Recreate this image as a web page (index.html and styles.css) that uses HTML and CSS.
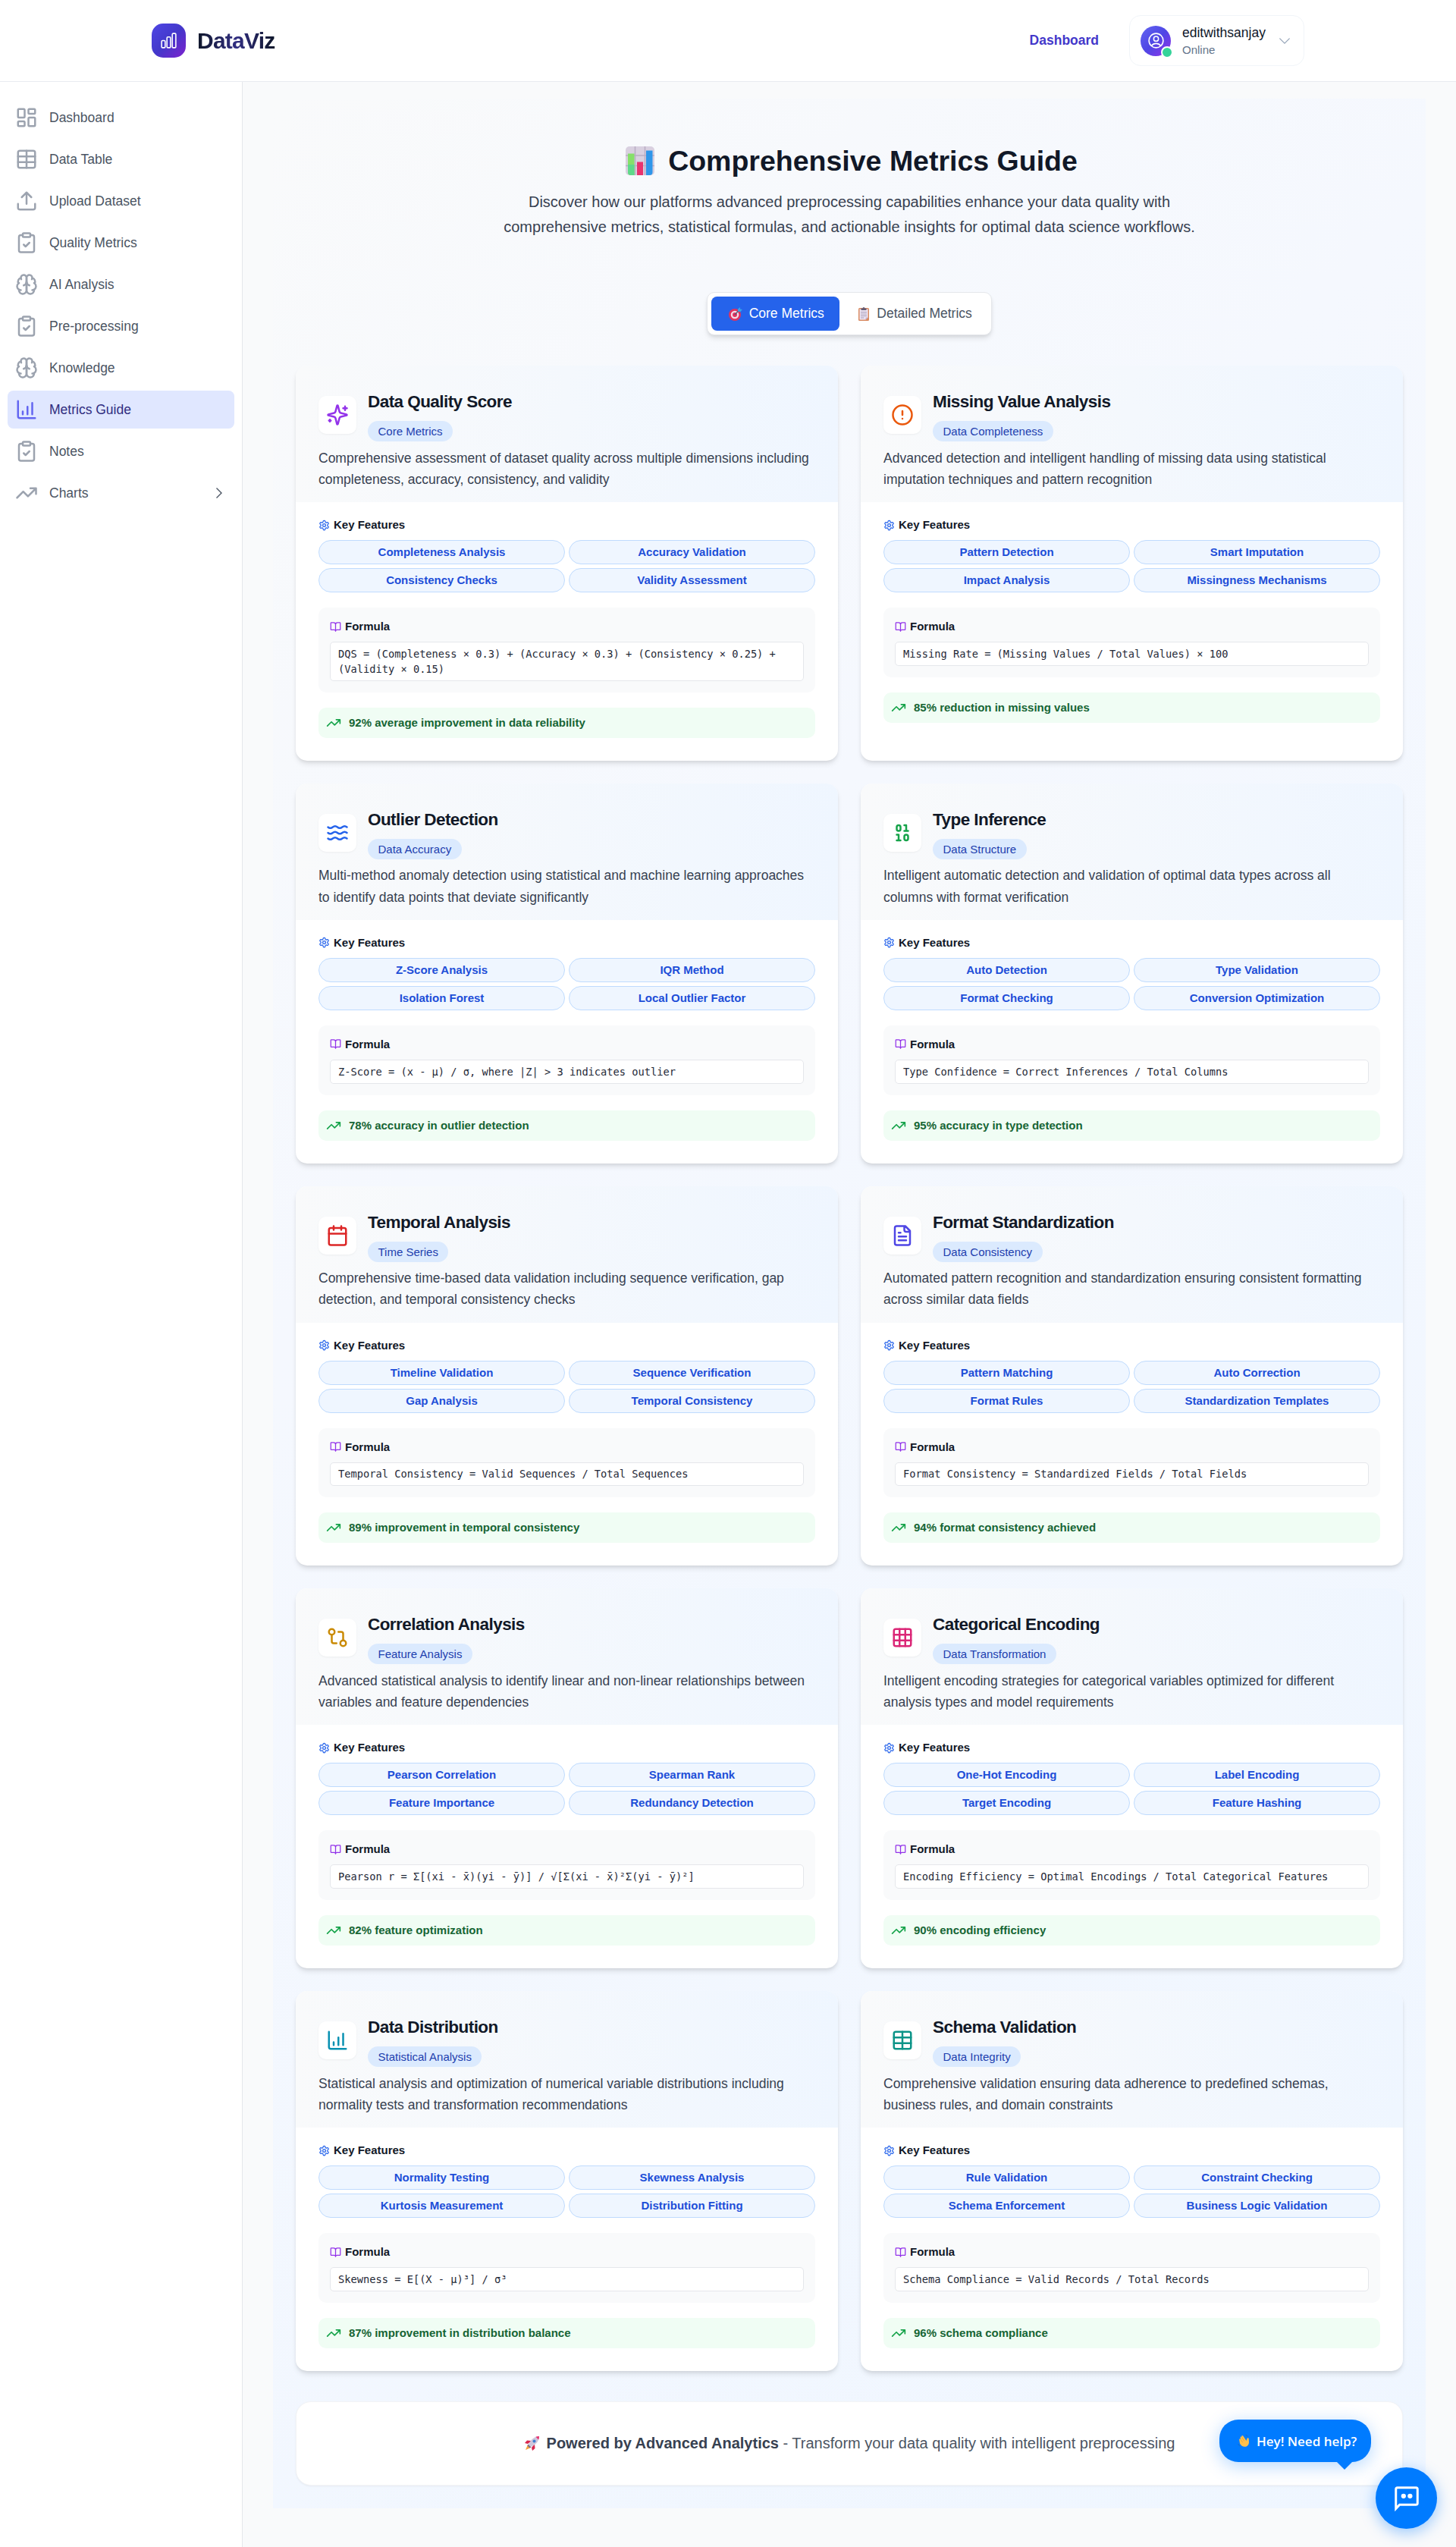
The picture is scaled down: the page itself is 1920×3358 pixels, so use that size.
FILE: index.html
```html
<!DOCTYPE html>
<html lang="en">
<head>
<meta charset="utf-8">
<title>DataViz</title>
<link rel="stylesheet" href="styles.css">
</head>
<body>
<svg class="sprite" aria-hidden="true">
  <symbol id="dashboard" viewBox="0 0 24 24"><rect x="3" y="3" width="7" height="9" rx="1"/><rect x="14" y="3" width="7" height="5" rx="1"/><rect x="14" y="12" width="7" height="9" rx="1"/><rect x="3" y="16" width="7" height="5" rx="1"/></symbol>
  <symbol id="table" viewBox="0 0 24 24"><path d="M12 3v18M3 9h18M3 15h18"/><rect x="3" y="3" width="18" height="18" rx="2"/></symbol>
  <symbol id="upload" viewBox="0 0 24 24"><path d="M21 15v4a2 2 0 0 1-2 2H5a2 2 0 0 1-2-2v-4M17 8l-5-5-5 5M12 3v12"/></symbol>
  <symbol id="clipboard" viewBox="0 0 24 24"><rect x="8" y="2" width="8" height="4" rx="1"/><path d="M16 4h2a2 2 0 0 1 2 2v14a2 2 0 0 1-2 2H6a2 2 0 0 1-2-2V6a2 2 0 0 1 2-2h2M9 14l2 2 4-4"/></symbol>
  <symbol id="brain" viewBox="0 0 24 24"><path d="M12 5a3 3 0 1 0-5.997.125 4 4 0 0 0-2.526 5.77 4 4 0 0 0 .556 6.588A4 4 0 1 0 12 18Z"/><path d="M12 5a3 3 0 1 1 5.997.125 4 4 0 0 1 2.526 5.77 4 4 0 0 1-.556 6.588A4 4 0 1 1 12 18Z"/><path d="M15 13a4.5 4.5 0 0 1-3-4 4.5 4.5 0 0 1-3 4M17.599 6.5a3 3 0 0 0 .399-1.375M6.003 5.125A3 3 0 0 0 6.401 6.5M3.477 10.896a4 4 0 0 1 .585-.396M19.938 10.5a4 4 0 0 1 .585.396M6 18a4 4 0 0 1-1.967-.516M19.967 17.484A4 4 0 0 1 18 18"/></symbol>
  <symbol id="chart" viewBox="0 0 24 24"><path d="M13 17V9M18 17V5M3 3v16a2 2 0 0 0 2 2h16M8 17v-3"/></symbol>
  <symbol id="trend" viewBox="0 0 24 24"><path d="M22 7l-8.500 8.500-5-5L2 17M16 7h6v6"/></symbol>
  <symbol id="sparkles" viewBox="0 0 24 24"><path d="M9.937 15.5A2 2 0 0 0 8.5 14.063l-6.135-1.582a.5.5 0 0 1 0-.962L8.5 9.936A2 2 0 0 0 9.937 8.5l1.582-6.135a.5.5 0 0 1 .963 0L14.063 8.5A2 2 0 0 0 15.5 9.937l6.135 1.581a.5.5 0 0 1 0 .964L15.5 14.063a2 2 0 0 0-1.437 1.437l-1.582 6.135a.5.5 0 0 1-.963 0zM20 3v4M22 5h-4M4 17v2M5 18H3"/></symbol>
  <symbol id="alert" viewBox="0 0 24 24"><circle cx="12" cy="12" r="10"/><path d="M12 8v4M12 16h.01"/></symbol>
  <symbol id="waves" viewBox="0 0 24 24"><path d="M2 6c.6.5 1.2 1 2.5 1C7 7 7 5 9.5 5c2.6 0 2.4 2 5 2 2.5 0 2.5-2 5-2 1.3 0 1.9.5 2.5 1M2 12c.6.5 1.2 1 2.5 1 2.5 0 2.5-2 5-2 2.6 0 2.4 2 5 2 2.5 0 2.500-2 5-2 1.3 0 1.9.5 2.5 1M2 18c.6.5 1.2 1 2.500 1 2.500 0 2.500-2 5-2 2.6 0 2.4 2 5 2 2.500 0 2.500-2 5-2 1.3 0 1.9.5 2.500 1"/></symbol>
  <symbol id="binary" viewBox="0 0 24 24"><rect x="14" y="14" width="4" height="6" rx="2"/><rect x="6" y="4" width="4" height="6" rx="2"/><path d="M6 20h4M14 10h4M6 14h2v6M14 4h2v6"/></symbol>
  <symbol id="calendar" viewBox="0 0 24 24"><path d="M8 2v4M16 2v4M3 10h18"/><rect x="3" y="4" width="18" height="18" rx="2"/></symbol>
  <symbol id="file" viewBox="0 0 24 24"><path d="M15 2H6a2 2 0 0 0-2 2v16a2 2 0 0 0 2 2h12a2 2 0 0 0 2-2V7ZM14 2v4a2 2 0 0 0 2 2h4M10 9H8M16 13H8M16 17H8"/></symbol>
  <symbol id="compare" viewBox="0 0 24 24"><circle cx="18" cy="18" r="3"/><circle cx="6" cy="6" r="3"/><path d="M13 6h3a2 2 0 0 1 2 2v7M11 18H8a2 2 0 0 1-2-2V9"/></symbol>
  <symbol id="grid" viewBox="0 0 24 24"><rect x="3" y="3" width="18" height="18" rx="2"/><path d="M3 9h18M3 15h18M9 3v18M15 3v18"/></symbol>
  <symbol id="gear" viewBox="0 0 24 24"><path d="M12.22 2h-.44a2 2 0 0 0-2 2v.18a2 2 0 0 1-1 1.73l-.43.25a2 2 0 0 1-2 0l-.15-.08a2 2 0 0 0-2.73.73l-.22.38a2 2 0 0 0 .73 2.73l.15.1a2 2 0 0 1 1 1.72v.51a2 2 0 0 1-1 1.74l-.15.09a2 2 0 0 0-.73 2.73l.22.38a2 2 0 0 0 2.73.73l.15-.08a2 2 0 0 1 2 0l.43.25a2 2 0 0 1 1 1.73V20a2 2 0 0 0 2 2h.44a2 2 0 0 0 2-2v-.18a2 2 0 0 1 1-1.73l.43-.25a2 2 0 0 1 2 0l.15.08a2 2 0 0 0 2.73-.73l.22-.39a2 2 0 0 0-.73-2.73l-.15-.08a2 2 0 0 1-1-1.74v-.5a2 2 0 0 1 1-1.74l.15-.09a2 2 0 0 0 .73-2.73l-.22-.38a2 2 0 0 0-2.73-.73l-.15.08a2 2 0 0 1-2 0l-.43-.25a2 2 0 0 1-1-1.73V4a2 2 0 0 0-2-2z"/><circle cx="12" cy="12" r="3"/></symbol>
  <symbol id="book" viewBox="0 0 24 24"><path d="M12 7v14M3 18a1 1 0 0 1-1-1V4a1 1 0 0 1 1-1h5a4 4 0 0 1 4 4 4 4 0 0 1 4-4h5a1 1 0 0 1 1 1v13a1 1 0 0 1-1 1h-6a3 3 0 0 0-3 3 3 3 0 0 0-3-3z"/></symbol>
  <symbol id="bars" viewBox="0 0 24 24"><path d="M3 13.125C3 12.504 3.504 12 4.125 12h2.25c.621 0 1.125.504 1.125 1.125v6.75C7.500 20.496 6.996 21 6.375 21h-2.250A1.125 1.125 0 0 1 3 19.875v-6.750ZM9.750 8.625c0-.621.504-1.125 1.125-1.125h2.250c.621 0 1.125.504 1.125 1.125v11.250c0 .621-.504 1.125-1.125 1.125h-2.250a1.125 1.125 0 0 1-1.125-1.125V8.625ZM16.500 4.125c0-.621.504-1.125 1.125-1.125h2.250C20.496 3 21 3.504 21 4.125v15.750c0 .621-.504 1.125-1.125 1.125h-2.250a1.125 1.125 0 0 1-1.125-1.125V4.125Z"/></symbol>
  <symbol id="user" viewBox="0 0 24 24"><path d="M17.982 18.725A7.488 7.488 0 0 0 12 15.750a7.488 7.488 0 0 0-5.982 2.975m11.963 0a9 9 0 1 0-11.963 0m11.963 0A8.966 8.966 0 0 1 12 21a8.966 8.966 0 0 1-5.982-2.275M15 9.750a3 3 0 1 1-6 0 3 3 0 0 1 6 0Z"/></symbol>
</svg>

<header class="topbar">
  <div class="brand">
    <span class="brand-mark"><svg class="icon thin" width="25" height="25"><use href="#bars"/></svg></span>
    <span class="brand-name">DataViz</span>
  </div>
  <div class="topbar-right">
    <a class="top-link">Dashboard</a>
    <div class="user">
      <span class="avatar"><svg class="icon thin" width="25" height="25"><use href="#user"/></svg><i class="presence"></i></span>
      <span class="user-text"><span class="user-name">editwithsanjay</span><span class="user-state">Online</span></span>
      <svg class="icon thin user-caret" width="20" height="20" viewBox="0 0 24 24"><path d="M19.500 8.250l-7.500 7.500-7.500-7.500"/></svg>
    </div>
  </div>
</header>

<div class="shell">
  <nav class="sidebar">
    <a class="nav-item"><svg class="icon"><use href="#dashboard"/></svg>Dashboard</a>
    <a class="nav-item"><svg class="icon"><use href="#table"/></svg>Data Table</a>
    <a class="nav-item"><svg class="icon"><use href="#upload"/></svg>Upload Dataset</a>
    <a class="nav-item"><svg class="icon"><use href="#clipboard"/></svg>Quality Metrics</a>
    <a class="nav-item"><svg class="icon"><use href="#brain"/></svg>AI Analysis</a>
    <a class="nav-item"><svg class="icon"><use href="#clipboard"/></svg>Pre-processing</a>
    <a class="nav-item"><svg class="icon"><use href="#brain"/></svg>Knowledge</a>
    <a class="nav-item active"><svg class="icon"><use href="#chart"/></svg>Metrics Guide</a>
    <a class="nav-item"><svg class="icon"><use href="#clipboard"/></svg>Notes</a>
    <a class="nav-item"><svg class="icon"><use href="#trend"/></svg>Charts<svg class="nav-caret" viewBox="0 0 20 20"><path d="M6.500 3.500 13 10l-6.500 6.500"/></svg></a>
  </nav>

  <main class="content">
    <div class="guide">
      <section class="intro">
        <h1>
          <svg class="emoji-title" viewBox="0 0 38 38"><rect width="38" height="38" rx="5" fill="#d9d0e0"/><path d="M12.500 0v38M25.500 0v38M0 12h38M0 25.500h38" stroke="#b9adc4" stroke-width="1.500"/><path d="M3 9.500h8.500V38H7a4 4 0 0 1-4-4z" fill="#86e06a"/><path d="M3 24h8.500v14H7a4 4 0 0 1-4-4z" fill="#5fd98a"/><path d="M15 20.500h8V38h-8z" fill="#e8336f"/><path d="M27 5.500h8.500V34a4 4 0 0 1-4 4H27z" fill="#2f96ea"/></svg>Comprehensive Metrics Guide</h1>
        <p>Discover how our platforms advanced preprocessing capabilities enhance your data quality with comprehensive metrics, statistical formulas, and actionable insights for optimal data science workflows.</p>
      </section>

      <div class="tabs-row"><div class="tabs">
        <button class="tab selected"><svg class="emoji" viewBox="0 0 18 18"><circle cx="8" cy="10" r="8" fill="#e0335f"/><circle cx="8" cy="10" r="5.300" fill="#f3dbe6"/><circle cx="8" cy="10" r="3" fill="#e0335f"/><path d="M8 10l5.500-6" stroke="#4b5c78" stroke-width="1.200"/><path d="M12 5.500V2.500L15 0v2.500l2.800.500-2.300 3z" fill="#34a5ec"/></svg>Core Metrics</button>
        <button class="tab"><svg class="emoji" viewBox="0 0 18 18"><rect x="2" y="1" width="14" height="17" rx="1.500" fill="#d98b62"/><path d="M3.500 2.500h11v11l-3 3h-8z" fill="#efe6f5"/><path d="M11.500 16.500v-3h3z" fill="#bba9cf"/><path d="M5 6.500h8M5 9h8M5 11.500h8M5 14h4.500" stroke="#9a8fae" stroke-width=".9"/><path d="M5.500 1.500h2a1.500 1.500 0 0 1 3 0h2V4h-7z" fill="#645b73"/></svg>Detailed Metrics</button>
      </div></div>

      <section class="cards">
        <article class="card">
          <div class="card-head"><div class="card-title"><span class="card-icon purple"><svg class="icon"><use href="#sparkles"/></svg></span><div><h2>Data Quality Score</h2><span class="badge">Core Metrics</span></div></div>
            <p>Comprehensive assessment of dataset quality across multiple dimensions including completeness, accuracy, consistency, and validity</p></div>
          <div class="card-body">
            <h3 class="label features"><svg class="icon"><use href="#gear"/></svg>Key Features</h3>
            <div class="pills"><span>Completeness Analysis</span><span>Accuracy Validation</span><span>Consistency Checks</span><span>Validity Assessment</span></div>
            <div class="formula"><h3 class="label"><svg class="icon"><use href="#book"/></svg>Formula</h3><code>DQS = (Completeness × 0.3) + (Accuracy × 0.3) + (Consistency × 0.25) + (Validity × 0.15)</code></div>
            <div class="impact"><svg class="icon"><use href="#trend"/></svg>92% average improvement in data reliability</div>
          </div>
        </article>
        <article class="card">
          <div class="card-head"><div class="card-title"><span class="card-icon orange"><svg class="icon"><use href="#alert"/></svg></span><div><h2>Missing Value Analysis</h2><span class="badge">Data Completeness</span></div></div>
            <p>Advanced detection and intelligent handling of missing data using statistical imputation techniques and pattern recognition</p></div>
          <div class="card-body">
            <h3 class="label features"><svg class="icon"><use href="#gear"/></svg>Key Features</h3>
            <div class="pills"><span>Pattern Detection</span><span>Smart Imputation</span><span>Impact Analysis</span><span>Missingness Mechanisms</span></div>
            <div class="formula"><h3 class="label"><svg class="icon"><use href="#book"/></svg>Formula</h3><code>Missing Rate = (Missing Values / Total Values) × 100</code></div>
            <div class="impact"><svg class="icon"><use href="#trend"/></svg>85% reduction in missing values</div>
          </div>
        </article>
        <article class="card">
          <div class="card-head"><div class="card-title"><span class="card-icon blue"><svg class="icon"><use href="#waves"/></svg></span><div><h2>Outlier Detection</h2><span class="badge">Data Accuracy</span></div></div>
            <p>Multi-method anomaly detection using statistical and machine learning approaches to identify data points that deviate significantly</p></div>
          <div class="card-body">
            <h3 class="label features"><svg class="icon"><use href="#gear"/></svg>Key Features</h3>
            <div class="pills"><span>Z-Score Analysis</span><span>IQR Method</span><span>Isolation Forest</span><span>Local Outlier Factor</span></div>
            <div class="formula"><h3 class="label"><svg class="icon"><use href="#book"/></svg>Formula</h3><code>Z-Score = (x - μ) / σ, where |Z| &gt; 3 indicates outlier</code></div>
            <div class="impact"><svg class="icon"><use href="#trend"/></svg>78% accuracy in outlier detection</div>
          </div>
        </article>
        <article class="card">
          <div class="card-head"><div class="card-title"><span class="card-icon green"><svg class="icon"><use href="#binary"/></svg></span><div><h2>Type Inference</h2><span class="badge">Data Structure</span></div></div>
            <p>Intelligent automatic detection and validation of optimal data types across all columns with format verification</p></div>
          <div class="card-body">
            <h3 class="label features"><svg class="icon"><use href="#gear"/></svg>Key Features</h3>
            <div class="pills"><span>Auto Detection</span><span>Type Validation</span><span>Format Checking</span><span>Conversion Optimization</span></div>
            <div class="formula"><h3 class="label"><svg class="icon"><use href="#book"/></svg>Formula</h3><code>Type Confidence = Correct Inferences / Total Columns</code></div>
            <div class="impact"><svg class="icon"><use href="#trend"/></svg>95% accuracy in type detection</div>
          </div>
        </article>
        <article class="card">
          <div class="card-head"><div class="card-title"><span class="card-icon red"><svg class="icon"><use href="#calendar"/></svg></span><div><h2>Temporal Analysis</h2><span class="badge">Time Series</span></div></div>
            <p>Comprehensive time-based data validation including sequence verification, gap detection, and temporal consistency checks</p></div>
          <div class="card-body">
            <h3 class="label features"><svg class="icon"><use href="#gear"/></svg>Key Features</h3>
            <div class="pills"><span>Timeline Validation</span><span>Sequence Verification</span><span>Gap Analysis</span><span>Temporal Consistency</span></div>
            <div class="formula"><h3 class="label"><svg class="icon"><use href="#book"/></svg>Formula</h3><code>Temporal Consistency = Valid Sequences / Total Sequences</code></div>
            <div class="impact"><svg class="icon"><use href="#trend"/></svg>89% improvement in temporal consistency</div>
          </div>
        </article>
        <article class="card">
          <div class="card-head"><div class="card-title"><span class="card-icon indigo"><svg class="icon"><use href="#file"/></svg></span><div><h2>Format Standardization</h2><span class="badge">Data Consistency</span></div></div>
            <p>Automated pattern recognition and standardization ensuring consistent formatting across similar data fields</p></div>
          <div class="card-body">
            <h3 class="label features"><svg class="icon"><use href="#gear"/></svg>Key Features</h3>
            <div class="pills"><span>Pattern Matching</span><span>Auto Correction</span><span>Format Rules</span><span>Standardization Templates</span></div>
            <div class="formula"><h3 class="label"><svg class="icon"><use href="#book"/></svg>Formula</h3><code>Format Consistency = Standardized Fields / Total Fields</code></div>
            <div class="impact"><svg class="icon"><use href="#trend"/></svg>94% format consistency achieved</div>
          </div>
        </article>
        <article class="card">
          <div class="card-head"><div class="card-title"><span class="card-icon yellow"><svg class="icon"><use href="#compare"/></svg></span><div><h2>Correlation Analysis</h2><span class="badge">Feature Analysis</span></div></div>
            <p>Advanced statistical analysis to identify linear and non-linear relationships between variables and feature dependencies</p></div>
          <div class="card-body">
            <h3 class="label features"><svg class="icon"><use href="#gear"/></svg>Key Features</h3>
            <div class="pills"><span>Pearson Correlation</span><span>Spearman Rank</span><span>Feature Importance</span><span>Redundancy Detection</span></div>
            <div class="formula"><h3 class="label"><svg class="icon"><use href="#book"/></svg>Formula</h3><code>Pearson r = Σ[(xi - x̄)(yi - ȳ)] / √[Σ(xi - x̄)²Σ(yi - ȳ)²]</code></div>
            <div class="impact"><svg class="icon"><use href="#trend"/></svg>82% feature optimization</div>
          </div>
        </article>
        <article class="card">
          <div class="card-head"><div class="card-title"><span class="card-icon pink"><svg class="icon"><use href="#grid"/></svg></span><div><h2>Categorical Encoding</h2><span class="badge">Data Transformation</span></div></div>
            <p>Intelligent encoding strategies for categorical variables optimized for different analysis types and model requirements</p></div>
          <div class="card-body">
            <h3 class="label features"><svg class="icon"><use href="#gear"/></svg>Key Features</h3>
            <div class="pills"><span>One-Hot Encoding</span><span>Label Encoding</span><span>Target Encoding</span><span>Feature Hashing</span></div>
            <div class="formula"><h3 class="label"><svg class="icon"><use href="#book"/></svg>Formula</h3><code>Encoding Efficiency = Optimal Encodings / Total Categorical Features</code></div>
            <div class="impact"><svg class="icon"><use href="#trend"/></svg>90% encoding efficiency</div>
          </div>
        </article>
        <article class="card">
          <div class="card-head"><div class="card-title"><span class="card-icon cyan"><svg class="icon"><use href="#chart"/></svg></span><div><h2>Data Distribution</h2><span class="badge">Statistical Analysis</span></div></div>
            <p>Statistical analysis and optimization of numerical variable distributions including normality tests and transformation recommendations</p></div>
          <div class="card-body">
            <h3 class="label features"><svg class="icon"><use href="#gear"/></svg>Key Features</h3>
            <div class="pills"><span>Normality Testing</span><span>Skewness Analysis</span><span>Kurtosis Measurement</span><span>Distribution Fitting</span></div>
            <div class="formula"><h3 class="label"><svg class="icon"><use href="#book"/></svg>Formula</h3><code>Skewness = E[(X - μ)³] / σ³</code></div>
            <div class="impact"><svg class="icon"><use href="#trend"/></svg>87% improvement in distribution balance</div>
          </div>
        </article>
        <article class="card">
          <div class="card-head"><div class="card-title"><span class="card-icon teal"><svg class="icon"><use href="#table"/></svg></span><div><h2>Schema Validation</h2><span class="badge">Data Integrity</span></div></div>
            <p>Comprehensive validation ensuring data adherence to predefined schemas, business rules, and domain constraints</p></div>
          <div class="card-body">
            <h3 class="label features"><svg class="icon"><use href="#gear"/></svg>Key Features</h3>
            <div class="pills"><span>Rule Validation</span><span>Constraint Checking</span><span>Schema Enforcement</span><span>Business Logic Validation</span></div>
            <div class="formula"><h3 class="label"><svg class="icon"><use href="#book"/></svg>Formula</h3><code>Schema Compliance = Valid Records / Total Records</code></div>
            <div class="impact"><svg class="icon"><use href="#trend"/></svg>96% schema compliance</div>
          </div>
        </article>
      </section>

      <footer class="powered">
        <svg class="emoji-rocket" viewBox="0 0 22 22"><path d="M2 20l3-7 4 4z" fill="#f7a13b"/><path d="M5 12l5-4-6-.500L1 11zM10 17l4-5 .500 6L11 21z" fill="#d9264e"/><path d="M6 13C9 6 14 2 20 2c0 6-4 11-11 14z" fill="#cfc6dc"/><path d="M15.500 2.800C17 2.200 18.500 2 20 2c0 1.500-.200 3-.800 4.500z" fill="#e8336f"/><circle cx="13.500" cy="8.500" r="2" fill="#3f7fd0"/><path d="M5.500 12.500l4 4-2 1-3-3z" fill="#7a7189"/></svg>
        <span><strong>Powered by Advanced Analytics</strong> - Transform your data quality with intelligent preprocessing</span>
      </footer>
    </div>
  </main>
</div>

<div class="help-bubble"><svg class="emoji-wave" viewBox="0 0 18 18"><path d="M3 12.500 2.200 7.500c-.2-1.300 1.400-1.600 1.800-.400L3.700 5c-.4-1.400 1.400-2 2-.700l-.3-1c-.4-1.300 1.300-1.900 1.900-.700L11.500 9l.8-2.800c.4-1.500 2.600-1.100 2.500.4-.1 3 1 5.500-1.300 8.300-2.600 3.200-8.500 2.300-10.500-2.400z" fill="#ffc04d"/><path d="M4 7.100l2.600 4M5.700 4.300l3 5" stroke="#e29a2e" stroke-width=".7" fill="none"/><path d="M10.500 1.200c1.400.3 2.300 1 2.800 2.200M.8 13c.3 1.400 1 2.300 2.200 3" stroke="#1769c2" stroke-width="1" fill="none"/></svg>Hey! Need help?</div>
<div class="chat-button"><svg width="42" height="42" viewBox="0 0 24 24"><path fill="#fff" fill-rule="evenodd" d="M5 3h14a2 2 0 0 1 2 2v10.500a2 2 0 0 1-2 2H7L3 21.800V5a2 2 0 0 1 2-2zm0 1.700a.300.300 0 0 0-.300.300v12.400l1.600-1.600H19a.300.300 0 0 0 .300-.300V5a.300.300 0 0 0-.300-.300z"/><circle cx="9.600" cy="10.200" r="1.800" fill="#fff"/><circle cx="14.500" cy="10.200" r="1.800" fill="#fff"/></svg></div>
</body>
</html>
```
FILE: styles.css
```css
* { box-sizing: border-box; }
body {
  margin: 0;
  min-height: 3358px;
  display: flex;
  flex-direction: column;
  position: relative;
  background: #f9fafb;
  color: #111827;
  font-family: "Liberation Sans", Arial, sans-serif;
}
h1, h2, h3, p { margin: 0; }
.sprite { position: absolute; width: 0; height: 0; }
.icon {
  flex: none;
  width: 30px;
  height: 30px;
  fill: none;
  stroke: currentColor;
  stroke-width: 2;
  stroke-linecap: round;
  stroke-linejoin: round;
}
.icon.thin { width: 25px; height: 25px; stroke-width: 1.5; }

/* Top bar */
.topbar {
  height: 108px;
  padding: 0 200px;
  display: flex;
  align-items: center;
  justify-content: space-between;
  background: #fff;
  border-bottom: 1px solid #e8ebf0;
}
.brand { display: flex; align-items: center; gap: 15px; }
.brand-mark {
  width: 45px;
  height: 45px;
  display: flex;
  align-items: center;
  justify-content: center;
  border-radius: 15px;
  color: #fff;
  background: linear-gradient(135deg, #4f46e5, #4338ca 50%, #7e22ce);
}
.brand-name {
  font-size: 30px;
  line-height: 40px;
  font-weight: 700;
  letter-spacing: -0.75px;
  color: transparent;
  background: linear-gradient(90deg, #0f172a, #312e81 50%, #0f172a);
  -webkit-background-clip: text;
  background-clip: text;
}
.topbar-right { display: flex; align-items: center; gap: 40px; }
.top-link { font-size: 17.5px; font-weight: 700; color: #4338ca; }
.user {
  width: 231px;
  height: 67px;
  padding: 0 15px 0 14px;
  display: flex;
  align-items: center;
  border: 1px solid #f1f5f9;
  border-radius: 15px;
}
.avatar {
  position: relative;
  width: 40px;
  height: 40px;
  display: flex;
  align-items: center;
  justify-content: center;
  border-radius: 50%;
  color: #fff;
  background: linear-gradient(135deg, #6366f1, #4f46e5 50%, #9333ea);
}
.presence {
  position: absolute;
  right: -3px;
  bottom: -3px;
  width: 16px;
  height: 16px;
  border: 2.5px solid #fff;
  border-radius: 50%;
  background: #34d399;
}
.user-text { display: flex; flex-direction: column; margin-left: 15px; }
.user-name { font-size: 17.5px; line-height: 25px; color: #0f172a; }
.user-state { font-size: 15px; line-height: 20px; color: #64748b; }
.icon.user-caret { width: 20px; height: 20px; margin-left: auto; color: #94a3b8; }

/* Sidebar */
.shell { flex: 1; display: flex; }
.sidebar {
  flex: none;
  width: 320px;
  padding: 22px 10px;
  display: flex;
  flex-direction: column;
  gap: 5px;
  background: #fff;
  border-right: 1px solid #e5e7eb;
}
.nav-item {
  height: 50px;
  padding: 0 10px;
  display: flex;
  align-items: center;
  gap: 15px;
  border-radius: 7.5px;
  font-size: 17.5px;
  color: #4b5563;
}
.nav-item .icon { color: #9ca3af; }
.nav-item.active { background: #e0e7ff; color: #312e81; }
.nav-item.active .icon { color: #6366f1; }
.nav-caret {
  width: 20px;
  height: 20px;
  margin-left: auto;
  fill: none;
  stroke: #4b5563;
  stroke-width: 1.4;
}

/* Guide */
.content { flex: 1; padding: 22px 40px 50px; }
.guide {
  padding: 52px 30px 30px;
  background: linear-gradient(135deg, #f9fafb, #f5f8fe 35%, #eff6ff);
}
.intro { text-align: center; }
.intro h1 {
  display: flex;
  justify-content: center;
  align-items: center;
  font-size: 37.5px;
  line-height: 60px;
  font-weight: 700;
}
.emoji-title { width: 38px; height: 38px; margin: 0 18px 0 6px; }
.intro p {
  width: 960px;
  margin: 8px auto 0;
  font-size: 20px;
  line-height: 32.5px;
  color: #374151;
}
.tabs-row { display: flex; justify-content: center; margin: 70px 0 40px; }
.tabs {
  display: flex;
  padding: 5px;
  border: 1px solid #e5e7eb;
  border-radius: 10px;
  background: #fff;
  box-shadow: 0 5px 7.5px -1px rgba(0, 0, 0, .1), 0 2.5px 5px -2.5px rgba(0, 0, 0, .1);
}
.tab {
  height: 45px;
  padding: 0 20px;
  display: flex;
  align-items: center;
  border: 0;
  border-radius: 7.5px;
  background: none;
  font: 17.5px "Liberation Sans", Arial, sans-serif;
  color: #4b5563;
}
.tab.selected { background: #2563eb; color: #fff; }
.emoji { width: 18px; height: 18px; margin: 0 8.5px 0 3px; }

/* Cards */
.cards {
  display: grid;
  grid-template-columns: 1fr 1fr;
  gap: 30px;
}
.card {
  overflow: hidden;
  border-radius: 15px;
  background: #fff;
  box-shadow: 0 5px 7.5px -1px rgba(0, 0, 0, .1), 0 2.5px 5px -2.5px rgba(0, 0, 0, .1);
}
.card-head {
  height: 180px;
  padding: 30px 30px 0;
  background: linear-gradient(90deg, #f9fafb, #eff6ff);
}
.card-title { display: flex; align-items: center; gap: 15px; height: 70px; }
.card-icon {
  width: 50px;
  height: 50px;
  padding: 10px;
  border-radius: 10px;
  background: #fff;
  box-shadow: 0 1px 2.5px rgba(0, 0, 0, .05);
}
.card-icon .icon { display: block; }
.card h2 {
  font-size: 22.5px;
  line-height: 35px;
  font-weight: 700;
  letter-spacing: -0.5625px;
}
.badge {
  display: block;
  width: fit-content;
  margin-top: 8px;
  padding: 0 13.5px;
  border-radius: 14px;
  background: #dbeafe;
  color: #1e40af;
  font-size: 15px;
  line-height: 27px;
}
.card-head p {
  margin-top: 7.5px;
  font-size: 17.5px;
  line-height: 28.44px;
  color: #374151;
}
.card-body { padding: 20px 30px 30px; }
.label {
  display: flex;
  align-items: center;
  gap: 5px;
  font-size: 15px;
  line-height: 20px;
  font-weight: 700;
}
.label .icon { width: 15px; height: 15px; color: #9333ea; }
.label.features .icon { color: #2563eb; }
.pills {
  display: grid;
  grid-template-columns: 1fr 1fr;
  gap: 5px;
  margin: 10px 0 20px;
}
.pills span {
  padding: 5px;
  border: 1px solid #bfdbfe;
  border-radius: 16px;
  background: #eff6ff;
  color: #1d4ed8;
  font-size: 15px;
  line-height: 20px;
  font-weight: 700;
  text-align: center;
}
.formula { padding: 15px; border-radius: 10px; background: #f9fafb; }
.formula code {
  display: block;
  margin-top: 10px;
  padding: 4.875px 10px;
  border: 1px solid #e5e7eb;
  border-radius: 5px;
  background: #fff;
  color: #1f2937;
  font-family: "DejaVu Sans Mono", monospace;
  font-size: 13.7px;
  line-height: 20px;
}
.impact {
  margin-top: 20px;
  padding: 10px;
  display: flex;
  align-items: center;
  gap: 10px;
  border-radius: 10px;
  background: #f0fdf4;
  color: #166534;
  font-size: 15px;
  line-height: 20px;
  font-weight: 700;
}
.impact .icon { width: 20px; height: 20px; color: #16a34a; }
.purple { color: #9333ea; }
.orange { color: #ea580c; }
.blue { color: #2563eb; }
.green { color: #16a34a; }
.red { color: #dc2626; }
.indigo { color: #4f46e5; }
.yellow { color: #ca8a04; }
.pink { color: #db2777; }
.cyan { color: #0891b2; }
.teal { color: #0d9488; }

.powered {
  height: 111px;
  margin-top: 40px;
  display: flex;
  align-items: center;
  justify-content: center;
  gap: 8px;
  border: 1px solid #f3f4f6;
  border-radius: 20px;
  background: #fff;
  box-shadow: 0 1px 2.5px rgba(0, 0, 0, .05);
  font-size: 20px;
  color: #4b5563;
}
.powered strong { color: #374151; }
.emoji-rocket { width: 22px; height: 22px; }

/* Floating help */
.help-bubble {
  position: absolute;
  left: 1608px;
  top: 3190px;
  width: 200px;
  height: 56px;
  padding-left: 24px;
  display: flex;
  align-items: center;
  gap: 7px;
  border-radius: 25px;
  background: #007bff;
  box-shadow: 0 5px 25px rgba(0, 123, 255, .3);
  color: #fff;
  font: 600 17px "Open Sans", sans-serif;
  white-space: nowrap;
}
.help-bubble::after {
  content: "";
  position: absolute;
  right: 25px;
  bottom: -10px;
  border: 10px solid transparent;
  border-top-color: #007bff;
  border-bottom: 0;
}
.emoji-wave { width: 18px; height: 18px; }
.chat-button {
  position: absolute;
  left: 1814px;
  top: 3253px;
  width: 81px;
  height: 81px;
  display: flex;
  align-items: center;
  justify-content: center;
  border-radius: 50%;
  background: #007bff;
  box-shadow: 0 5px 20px rgba(0, 123, 255, .4);
}
```
